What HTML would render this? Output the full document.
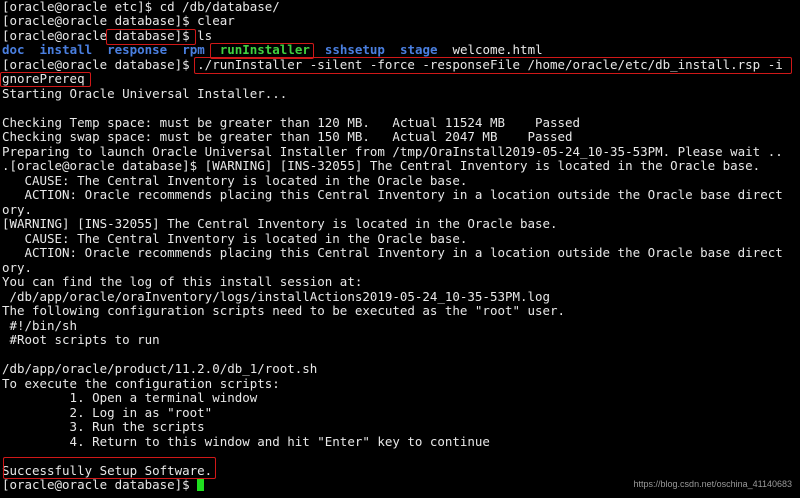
<!DOCTYPE html>
<html><head><style>
body{margin:0;background:#000;width:800px;height:498px;overflow:hidden;position:relative}
pre{margin:0;position:absolute;left:2px;top:0;font-family:"DejaVu Sans Mono","Liberation Mono",monospace;font-size:12.48px;line-height:14.48px;color:#e8e8e8}
.b{color:#4a7fe0;font-weight:bold}.g{color:#40d040;font-weight:bold}
.box{position:absolute;border:1.5px solid #d01818;border-radius:2px}
.cur{display:inline-block;width:7px;height:13px;background:#20e020;vertical-align:-2px}
.wm{position:absolute;right:8px;top:479px;font:9px "Liberation Sans",sans-serif;color:#9a9a9a}
</style></head><body>
<pre>[oracle@oracle etc]$ cd /db/database/
[oracle@oracle database]$ clear
[oracle@oracle database]$ ls
<span class="b">doc</span>  <span class="b">install</span>  <span class="b">response</span>  <span class="b">rpm</span>  <span class="g">runInstaller</span>  <span class="b">sshsetup</span>  <span class="b">stage</span>  welcome.html
[oracle@oracle database]$ ./runInstaller -silent -force -responseFile /home/oracle/etc/db_install.rsp -i
gnorePrereq
Starting Oracle Universal Installer...

Checking Temp space: must be greater than 120 MB.   Actual 11524 MB    Passed
Checking swap space: must be greater than 150 MB.   Actual 2047 MB    Passed
Preparing to launch Oracle Universal Installer from /tmp/OraInstall2019-05-24_10-35-53PM. Please wait ..
.[oracle@oracle database]$ [WARNING] [INS-32055] The Central Inventory is located in the Oracle base.
   CAUSE: The Central Inventory is located in the Oracle base.
   ACTION: Oracle recommends placing this Central Inventory in a location outside the Oracle base direct
ory.
[WARNING] [INS-32055] The Central Inventory is located in the Oracle base.
   CAUSE: The Central Inventory is located in the Oracle base.
   ACTION: Oracle recommends placing this Central Inventory in a location outside the Oracle base direct
ory.
You can find the log of this install session at:
 /db/app/oracle/oraInventory/logs/installActions2019-05-24_10-35-53PM.log
The following configuration scripts need to be executed as the "root" user.
 #!/bin/sh
 #Root scripts to run

/db/app/oracle/product/11.2.0/db_1/root.sh
To execute the configuration scripts:
         1. Open a terminal window
         2. Log in as "root"
         3. Run the scripts
         4. Return to this window and hit "Enter" key to continue

Successfully Setup Software.
[oracle@oracle database]$ <span class="cur"></span></pre>
<div class="box" style="left:106px;top:29px;width:88px;height:14px"></div>
<div class="box" style="left:210px;top:43px;width:102px;height:14px"></div>
<div class="box" style="left:194px;top:57px;width:596px;height:15px"></div>
<div class="box" style="left:0px;top:72px;width:89px;height:13px"></div>
<div class="box" style="left:3px;top:457px;width:211px;height:20px"></div>
<div class="wm">https://blog.csdn.net/oschina_41140683</div>
</body></html>
